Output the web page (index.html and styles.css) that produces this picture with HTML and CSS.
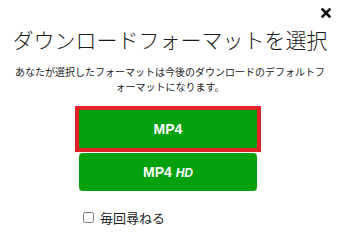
FILE: index.html
```html
<!DOCTYPE html>
<html lang="ja">
<head>
    <meta charset="UTF-8">
    <meta name="viewport" content="width=device-width, initial-scale=1.0">
    <title>ダウンロードフォーマットを選択</title>
    <link rel="stylesheet" href="styles.css">
</head>
<body>
    <div class="dialog">
        <button class="close" aria-label="閉じる">
            <svg width="10" height="10" viewBox="0 0 10 10">
                <path d="M1.5 1.5 L8.5 8.5 M8.5 1.5 L1.5 8.5" stroke="#111" stroke-width="2.6" stroke-linecap="square"/>
            </svg>
        </button>

        <h1 class="title">ダウンロードフォーマットを選択</h1>
        <p class="desc">あなたが選択したフォーマットは今後のダウンロードのデフォルトフ<br>ォーマットになります。</p>

        <div class="formats">
            <button class="format selected">MP4</button>
            <button class="format">MP4 <i>HD</i></button>
        </div>

        <label class="ask"><input type="checkbox"> 毎回尋ねる</label>
    </div>
</body>
</html>
```

FILE: styles.css
```css
body {
    margin: 0;
    padding: 0;
    background: #fff;
    color: #222;
    font-family: 'Noto Sans CJK JP', sans-serif;
}

.dialog {
    position: relative;
    width: 340px;
    height: 238px;
    padding-top: 25px;
    box-sizing: border-box;
    text-align: center;
}

.close {
    position: absolute;
    top: 7px;
    right: 8px;
    width: 12px;
    height: 12px;
    padding: 0;
    border: none;
    background: none;
    display: flex;
    align-items: center;
    justify-content: center;
}

.title {
    margin: 0;
    font-size: 21px;
    line-height: 28px;
    font-weight: 300;
    color: #1a1a1a;
}

.desc {
    margin: 11px 0 0;
    font-size: 10px;
    line-height: 15px;
    color: #222;
}

.formats {
    display: flex;
    flex-direction: column;
    align-items: center;
    gap: 5px;
    margin-top: 16px;
    margin-left: -4px;
}

.format {
    width: 178px;
    height: 38px;
    border: none;
    border-radius: 4px;
    background: #04a10f;
    color: #fff;
    font-family: 'Liberation Sans', Arial, sans-serif;
    font-size: 14px;
    font-weight: bold;
    cursor: pointer;
}

.format i {
    font-size: 12px;
}

.selected {
    border-radius: 0;
    outline: 4px solid #e2222a;
}

.ask {
    display: flex;
    align-items: center;
    gap: 6px;
    margin: 17px 0 0 83px;
    font-size: 13px;
    color: #222;
}

.ask input {
    width: 11px;
    height: 11px;
    margin: 0;
}
```
